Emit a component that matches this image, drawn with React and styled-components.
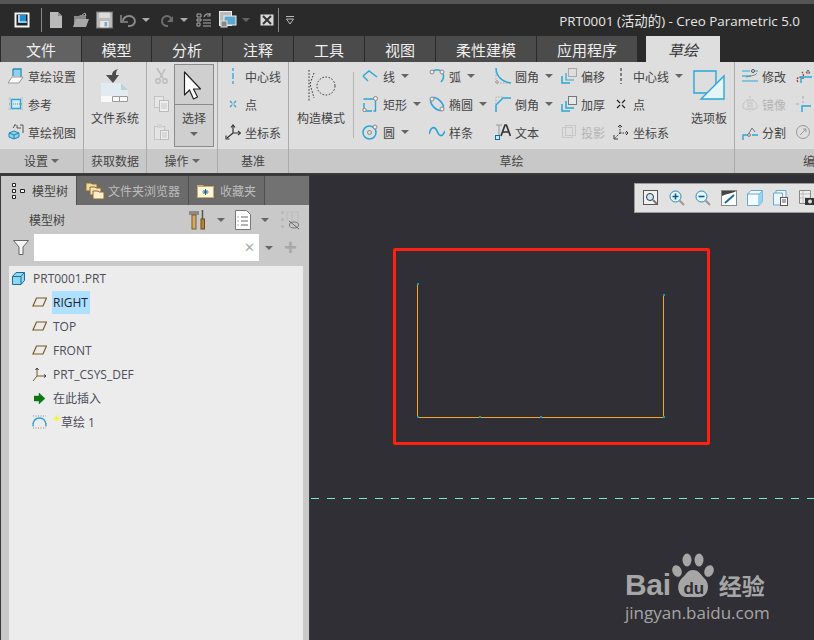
import React from "react";
import styled, { createGlobalStyle } from "styled-components";

const CJK = `"Noto Sans CJK SC", "Liberation Sans", sans-serif`;
const LATIN = `"Open Sans", "Noto Sans CJK SC", sans-serif`;

const Global = createGlobalStyle`
  html, body { margin: 0; padding: 0; background: #2f2f35; }
  * { box-sizing: border-box; }
`;

// 16px drawing box, everything below goes through this
const Ico = ({ s = 16, w, h, vb, children }) => (
  <svg width={w || s} height={h || s} viewBox={vb || `0 0 ${w || s} ${h || s}`} fill="none" style={{ flex: "none", display: "block" }}>
    {children}
  </svg>
);

const BLUE = "#2aa7d8";

const icons = {
  // title bar
  app: (
    <Ico>
      <rect x=".5" y=".5" width="15" height="15" fill="#f4f4f4" />
      <rect x="2.5" y="2.5" width="11" height="11" fill="#222" />
      <rect x="4" y="3" width="8" height="8" fill="#1d8fd6" />
      <path d="M5 3v7h8" stroke="#fff" strokeWidth="1.2" />
    </Ico>
  ),
  fileNew: <Ico><path d="M2 0h8l4 4v12H2z" fill="#b8b8b8" /><path d="M10 0v4h4" fill="#8c8c8c" /></Ico>,
  open: (
    <Ico w={18}>
      <path d="M2 4h5l1-1h6v9H2z" fill="#888" />
      <path d="M1 15l3-8h13l-3 8z" fill="#a8a8a8" />
      <path d="M10 3l3-2 1 3" stroke="#aaa" />
    </Ico>
  ),
  save: (
    <Ico w={17} h={18} vb="0 0 16 16">
      <rect x=".5" y=".5" width="15" height="15" fill="#bbb" stroke="#777" />
      <rect x="3" y="1" width="10" height="5" fill="#dcdcdc" />
      <rect x="4" y="9" width="8" height="6" fill="#e8e8e8" />
      <rect x="8" y="10" width="2.5" height="4" fill="#7aa6c8" />
    </Ico>
  ),
  undo: <Ico w={18}><path d="M3 9a6 5 0 1 1 5 5" stroke="#8a8a8a" strokeWidth="2" /><path d="M1 3v7h7" stroke="#8a8a8a" strokeWidth="1.5" /></Ico>,
  redo: <Ico><path d="M13 9a5 5 0 1 0-4 5" stroke="#6d6d6d" strokeWidth="2" /><path d="M14 4v6H8z" fill="#6d6d6d" /></Ico>,
  regen: (
    <Ico>
      <path d="M1 2h4v3H1zM1 7h4v2H1zM1 11h3v3H1zM7 8h8M7 11h8M7 14h8" stroke="#aaa" />
      <path d="M8 5c1-3 4-4 6-2M14 1v3h-3" stroke="#9a9a9a" strokeWidth="1.2" />
    </Ico>
  ),
  windows: (
    <Ico w={18} h={18}>
      <rect x=".5" y=".5" width="12" height="14" fill="#bbb" stroke="#eee" />
      <rect x="5" y="5" width="12" height="9" fill="#5ea7d0" stroke="#eee" />
      <rect x="2" y="10" width="6" height="6" fill="#888" stroke="#ddd" />
    </Ico>
  ),
  closeWin: (
    <Ico w={14} h={14}>
      <rect x=".5" y="1.5" width="13" height="11" fill="#d8d8d8" />
      <path d="M3 3l8 8M11 3l-8 8" stroke="#333" strokeWidth="2" />
    </Ico>
  ),
  customize: <Ico w={10} h={10}><path d="M1 1.5h8M1.5 4h7L5 9z" stroke="#bbb" /></Ico>,

  // settings group
  sketchSetup: (
    <Ico>
      <path d="M5 1h8v10" stroke="#1c8cb8" strokeWidth="1.3" />
      <path d="M5 1v7" stroke="#1c8cb8" strokeWidth="1.3" />
      <path d="M0 15l4-6h11l-4 6z" fill="#fff" stroke="#999" />
      <rect x="6" y="2" width="6" height="6" fill="#8fd0ea" />
    </Ico>
  ),
  refs: (
    <Ico>
      <path d="M2 1v14M14 1v14M0 3h16M0 13h16" stroke="#bbb" strokeDasharray="1 1" />
      <rect x="3.5" y="3.5" width="9" height="9" fill="#cdeaf6" stroke={BLUE} strokeWidth="1.4" />
      <path d="M1 8h14" stroke="#888" strokeDasharray="1 1" />
    </Ico>
  ),
  sketchView: (
    <Ico>
      <path d="M6 1h2M12 1h3v8M5 4l2-3" stroke="#555" />
      <path d="M9 1v3h4" stroke="#555" />
      <path d="M1 9l5-2 5 2v4l-5 2-5-2z" fill="#8fd0ea" stroke="#1c8cb8" />
      <path d="M1 9l5 2 5-2M6 11v4" stroke="#1c8cb8" />
    </Ico>
  ),
  fileSystem: (
    <Ico w={30} h={34}>
      <path d="M18 0c-4 1-6 3-6 6H6l7 8 6-8h-3c0-2 0-4 2-6z" fill="#4c4c4c" />
      <path d="M1 14h20l7 7v12H1z" fill="#f8f8f8" />
      <path d="M21 14v7h7z" fill="#b9d0de" />
      <path d="M1 14h20v7l7 0v6H1z" fill="#e2ebf0" />
      <path d="M12.500 27.500h7v5h-7zM19.500 27.500h8v5h-8z" stroke="#9a9a9a" />
    </Ico>
  ),
  cut: <Ico><path d="M3 0l6 10M11 1l-5 9" stroke="#bbb" strokeWidth="1.5" /><circle cx="4" cy="13" r="2.2" stroke="#bbb" strokeWidth="1.4" /><circle cx="11" cy="13" r="2.2" stroke="#bbb" strokeWidth="1.4" /></Ico>,
  copy: <Ico><rect x=".5" y=".5" width="9" height="11" fill="#e6e6e6" stroke="#c4c4c4" /><rect x="5.5" y="4.5" width="9" height="11" fill="#eee" stroke="#bbb" /><path d="M7 8h6M7 10h6M7 12h6" stroke="#c4c4c4" /></Ico>,
  paste: <Ico><rect x=".5" y="2.5" width="10" height="13" fill="#e4e4e4" stroke="#c4c4c4" /><rect x="3" y="0" width="5" height="4" fill="#d4d4d4" /><rect x="6.5" y="6.5" width="8" height="9" fill="#eee" stroke="#bbb" /><path d="M8 9h5M8 11h5M8 13h5" stroke="#c4c4c4" /></Ico>,
  cursor: <Ico w={18} h={30}><path d="M1.5 1v23l5-5 4 9 4-2-4-8h7z" fill="#fff" stroke="#222" strokeWidth="1.2" strokeLinejoin="round" /></Ico>,
  centerline: <Ico><path d="M8 0v3M8 5v6M8 13v3" stroke={BLUE} strokeWidth="1.3" /></Ico>,
  point: <Ico><path d="M5 5l2 2M11 5L9 7M5 11l2-2M11 11L9 9" stroke={BLUE} strokeWidth="1.3" /><circle cx="8" cy="8" r=".8" fill="#999" /></Ico>,
  csys: <Ico><path d="M8 9V2M8 9h7M8 9l-6 5" stroke="#333" strokeWidth="1.2" /><path d="M6 3.5L8 1l2 2.5M13 7l2.5 2-2.5 2M1 11.5V15h3.5" stroke="#333" strokeWidth="1.1" /></Ico>,

  // sketching group
  construct: (
    <Ico w={30} h={32}>
      <path d="M3 0v32M8 3L4 14l4 14" stroke="#333" strokeDasharray="1.6 1.6" />
      <circle cx="20" cy="16" r="9" stroke="#333" strokeDasharray="1.6 1.6" />
    </Ico>
  ),
  line: <Ico><path d="M1 8l6-5 8 6M1 8l5 5" stroke={BLUE} strokeWidth="1.4" /></Ico>,
  arc: <Ico><path d="M3 4c3-3 8-3 10 0 2 3 2 7-1 10" stroke={BLUE} strokeWidth="1.5" /><circle cx="3" cy="4" r="2" fill="#eee" stroke="#888" /><circle cx="13" cy="4" r="2" fill="#eee" stroke="#888" /></Ico>,
  rect: <Ico><path d="M2 7v8h8M1.500 3h11v1M13.500 5v10h-2" stroke={BLUE} strokeWidth="1.4" /><circle cx="13.500" cy="2.500" r="2" fill="#eee" stroke="#888" /><circle cx="2.500" cy="14" r="1.700" fill="#eee" stroke="#888" /></Ico>,
  ellipse: <Ico><ellipse cx="8" cy="8" rx="8" ry="4.5" transform="rotate(45 8 8)" stroke={BLUE} strokeWidth="1.6" /><circle cx="3" cy="3" r="2" fill="#eee" stroke="#888" /><circle cx="13" cy="13" r="2" fill="#eee" stroke="#888" /></Ico>,
  circle: <Ico><circle cx="7.5" cy="8.5" r="6.5" stroke={BLUE} strokeWidth="1.5" /><circle cx="7.5" cy="8.5" r="2" fill="#ddd" stroke="#888" /><circle cx="13" cy="3" r="2" fill="#eee" stroke="#888" /></Ico>,
  spline: <Ico><path d="M0 10c2-8 6-8 8-3s5 7 8 0" stroke={BLUE} strokeWidth="1.7" /></Ico>,
  fillet: <Ico><path d="M1 0c0 8 6 14 15 15" stroke={BLUE} strokeWidth="1.5" /><path d="M1 4v11h11" stroke="#aaa" strokeDasharray="1.5 1.5" /><circle cx="2" cy="14" r="1.3" fill="#ddd" stroke="#999" /></Ico>,
  chamfer: <Ico><path d="M1 16V9l7-7h8" stroke={BLUE} strokeWidth="1.5" /><path d="M1 8V1h7" stroke="#aaa" strokeDasharray="1.5 1.5" /></Ico>,
  text: <Ico><path d="M1 1h6M4 1v10" stroke="#999" /><path d="M6 12l4-11h1.4l4 11M7.5 8h6" stroke="#333" strokeWidth="1.7" /><rect x=".5" y="11.5" width="4" height="4" fill="#cdeaf6" stroke="#0b6f9e" /></Ico>,
  offset: <Ico><path d="M1 8v7h8" stroke={BLUE} strokeWidth="1.5" /><path d="M5 5v7h8" stroke={BLUE} strokeWidth="1.2" /><rect x="7.5" y=".5" width="8" height="8" stroke="#aaa" /></Ico>,
  thicken: <Ico><path d="M1 8v7h8M5 5v7h8" stroke={BLUE} strokeWidth="1.5" /><rect x="7.5" y=".5" width="8" height="8" fill="#e8e8e8" stroke="#777" /></Ico>,
  project: <Ico><rect x="1.5" y="3.5" width="10" height="10" stroke="#c8c8c8" /><rect x="4.5" y="1.5" width="10" height="10" stroke="#c8c8c8" /></Ico>,
  centerlineDark: <Ico><path d="M8 0v3M8 5v3M8 10v3M8 15v1" stroke="#333" strokeWidth="1.1" /></Ico>,
  pointDark: <Ico><path d="M4 4l3 3M12 4L9 7M4 12l3-3M12 12L9 9" stroke="#222" strokeWidth="1.2" /></Ico>,
  csysDark: <Ico><path d="M7 9V2M7 9h8M7 9l-5 5" stroke="#333" strokeDasharray="1.5 1" /><path d="M5 3l2-2 2 2M13 7l2 2-2 2M1 11v4h4" stroke="#333" /></Ico>,
  palette: (
    <Ico w={32} h={30}>
      <path d="M1 1h22v22H1z" stroke={BLUE} strokeWidth="1.4" />
      <path d="M31 6v23H8z" fill="#e6f3f9" stroke={BLUE} strokeWidth="1.4" />
    </Ico>
  ),
  modify: <Ico><path d="M0 3h8M13 3h3M0 13h16" stroke={BLUE} strokeWidth="1.2" /><path d="M4 9l9-2 2-2" stroke="#888" /><path d="M0 8h9" stroke={BLUE} strokeWidth="1.2" /><circle cx="11" cy="3" r="1.5" stroke="#555" /></Ico>,
  mirror: <Ico><path d="M8 0v16" stroke="#bbb" strokeDasharray="2 1" /><path d="M6 3L1 8v4l5 2zM10 3l5 5v4l-5 2z" stroke="#c4c4c4" /></Ico>,
  split: <Ico><path d="M1 16v-5h5M10 11h6" stroke={BLUE} strokeWidth="1.4" /><path d="M6 11l4-7 3 4" stroke="#777" /><circle cx="7" cy="11" r="1.4" fill="#eee" stroke="#777" /></Ico>,
  trim: <Ico w={18}><path d="M3 14c-3-4 2-6 4-4s2-4 0-6" stroke="#a63a2a" strokeDasharray="2 1" strokeWidth="1.3" /><path d="M6 15v-6h11" stroke={BLUE} strokeWidth="1.4" /><path d="M11 5l2-3 2 3z" stroke="#666" /></Ico>,
  corner: <Ico><path d="M1 8h3M8 0v3M8 5v2" stroke="#aaa" /><path d="M7 16V10h9" stroke={BLUE} strokeWidth="1.4" /></Ico>,
  rotate: <Ico><circle cx="8" cy="8" r="6.5" stroke="#999" /><path d="M5 11l6-6M8 5h3v3" stroke="#999" /></Ico>,

  // panel
  treeTab: <Ico w={14} h={16}><path d="M.5.5h3v3h-3zM.5 6.5h3v3h-3zM.5 12.5h3v3h-3zM8.5 6.5h4v3h-4z" fill="#fff" stroke="#222" /></Ico>,
  folders: (
    <Ico w={20} h={18}>
      <path d="M1 1h5l1 1h5v7H1z" fill="#f2d9a0" stroke="#8a6a3a" />
      <path d="M5 5h5l1 1h5v7H5z" fill="#f6e2b0" stroke="#8a6a3a" />
      <path d="M8 9h5l1 1h5v7H8z" fill="#fbeec8" stroke="#8a6a3a" />
    </Ico>
  ),
  favorite: (
    <Ico w={18} h={16}>
      <path d="M0 2h6l1 1h10v12H0z" fill="#c9a868" />
      <rect x="1" y="4" width="15" height="10" fill="#fdf6dc" />
      <path d="M8.5 6v6M5.5 9h6M6.5 7l4 4M10.5 7l-4 4" stroke="#0b5f8a" strokeWidth=".9" />
    </Ico>
  ),
  tools: (
    <Ico w={18} h={20}>
      <path d="M1 1h10v4H1z" fill="#8a8a8a" />
      <rect x="4" y="5" width="4" height="14" fill="#d4aa6a" stroke="#7a5a2a" />
      <path d="M14.5 0v9" stroke="#555" strokeWidth="1.5" />
      <rect x="13" y="9" width="3.5" height="10" fill="#b8863a" stroke="#6a4a1a" />
    </Ico>
  ),
  doc: <Ico w={16} h={20}><path d="M.5.5h11l4 4v15H.5z" fill="#fff" stroke="#777" /><path d="M6 7h7M6 11h7M6 15h7M2.5 7h1M2.5 11h1M2.5 15h1" stroke="#666" /></Ico>,
  treeOff: (
    <Ico w={20} h={20}>
      <path d="M1 1h3v3H1zM1 8h3v3H1zM1 15h3v3H1z" fill="#bbb" />
      <path d="M7 2h11v12M7 2v8M12 2v9" stroke="#bbb" />
      <ellipse cx="14" cy="15" rx="4.5" ry="3" stroke="#777" />
      <path d="M9 11l10 8" stroke="#666" />
    </Ico>
  ),
  filter: <Ico w={16} h={15}><path d="M.5.5h15L10 7v7.5H6V7z" fill="#f4f4f4" stroke="#666" /></Ico>,
  part: <Ico w={13} h={13}><path d="M4 .5h8.5v8L9 12.5H.5v-8z" fill="#8fd6f2" stroke="#1c6f96" /><path d="M.5 4.5H9v8M9 4.5l3.5-4" stroke="#1c6f96" /></Ico>,
  plane: <Ico w={15} h={10}><path d="M4.5 1h10L11 9H1z" stroke="#7a5a22" strokeWidth="1.2" /></Ico>,
  csysTree: <Ico w={15} h={15}><path d="M5 9V2M5 9h8M5 9l-4 5" stroke="#7a5a22" /><path d="M3.5 3L5 1l1.5 2M12 7.5L14 9l-2 1.5" stroke="#333" /></Ico>,
  insert: <Ico w={11} h={11}><path d="M0 3h5V0l6 5.5L5 11V8H0z" fill="#0b7a0b" stroke="#063" strokeWidth=".4" /></Ico>,
  sketchTree: <Ico w={15} h={14}><path d="M1 11c0-6 3-8 6.500-8s6.500 2 6.500 8" stroke={BLUE} strokeWidth="1.4" /><path d="M1 1h13M1 13h13M1 8v5M14 8v5" stroke="#888" strokeDasharray="1 1.500" /></Ico>,

  // floating view toolbar
  zoomBox: <Ico w={16} h={16}><rect x=".5" y=".5" width="14" height="14" fill="#f2f2f2" stroke="#555" /><circle cx="7" cy="7" r="3.500" fill="#cdeaf6" stroke="#333" /><path d="M10 10l4 4" stroke="#777" strokeWidth="2" /></Ico>,
  zoomIn: <Ico><circle cx="6.500" cy="6.500" r="5.500" fill="#e6f6fc" stroke="#2a88aa" /><path d="M3.500 6.500h6M6.500 3.500v6" stroke="#0b5f8a" strokeWidth="1.6" /><path d="M10.500 10.500l4.500 4.500" stroke="#999" strokeWidth="2" /></Ico>,
  zoomOut: <Ico><circle cx="6.500" cy="6.500" r="5.500" fill="#e6f6fc" stroke="#2a88aa" /><path d="M3.500 6.500h6" stroke="#0b5f8a" strokeWidth="1.6" /><path d="M10.500 10.500l4.500 4.500" stroke="#999" strokeWidth="2" /></Ico>,
  refit: <Ico><rect x=".5" y=".5" width="15" height="15" fill="#fff" stroke="#888" /><path d="M1 1h14c-2 2-8 2-14 5z" fill="#444" /><path d="M4 13L13 5" stroke="#1c6f96" strokeWidth="2" /></Ico>,
  view3d: <Ico><path d="M4 .5h11.500v11L12 15.500H.5V4z" fill="#f2fbff" stroke="#6aa8c8" /><path d="M12 15.500V4L15.500.5M12 4H.5" stroke="#6aa8c8" /><path d="M12 4l3.500-3.500v11L12 15.500z" fill="#8fd6f2" /></Ico>,
  viewSaved: <Ico><path d="M3 .5h10v9H3z" fill="#eef8fc" stroke="#6aa8c8" /><path d="M.5 3h9v12h-9z" fill="#eaf6fb" stroke="#6aa8c8" /><rect x="7.500" y="7.500" width="7" height="8" fill="#fff" stroke="#555" /><path d="M9 10h4M9 12h4" stroke="#555" /></Ico>,
  camera: <Ico w={16} h={16}><path d="M.5.500h11v13H.5z" stroke="#888" fill="#eee" /><path d="M1 4h10M1 8h10M4 1v12" stroke="#bbb" /><rect x="6" y="8" width="10" height="7" fill="#333" /><circle cx="11" cy="11.500" r="2" fill="#ddd" /></Ico>,
};

const Page = styled.div`
  width: 814px;
  height: 640px;
  overflow: hidden;
  display: flex;
  flex-direction: column;
  background: #2f2f35;
  font-family: ${CJK};
  font-size: 12px;
  color: #444;
`;

const TitleBar = styled.div`
  height: 36px;
  flex: none;
  background: #2a2a2a;
  border-top: 4px solid #555;
  display: flex;
  align-items: center;
  padding-left: 14px;
  color: #e6e6e6;
`;

const QuickItem = styled.span`
  flex: none;
  display: flex;
  margin-left: ${(p) => p.$gap || 0}px;
`;

const QuickDivider = styled.span`
  width: 1px;
  height: 24px;
  flex: none;
  background: #888;
  margin-left: ${(p) => p.$gap}px;
`;

const TinyCaret = styled.span`
  width: 0;
  height: 0;
  flex: none;
  border-left: 4px solid transparent;
  border-right: 4px solid transparent;
  border-top: 4px solid ${(p) => p.$color || "#666"};
  margin-left: ${(p) => p.$gap ?? 5}px;
`;

const WindowTitle = styled.div`
  margin-left: auto;
  margin-right: 14px;
  font-family: ${LATIN};
  font-size: 13.4px;
  white-space: nowrap;
`;

const TabBar = styled.div`
  height: 26px;
  flex: none;
  background: #2a2a2a;
  display: flex;
  padding-left: 1px;
`;

const Tab = styled.div`
  width: ${(p) => p.$w}px;
  margin-right: 1px;
  margin-left: ${(p) => p.$ml || 0}px;
  display: flex;
  align-items: center;
  justify-content: center;
  font-size: 15px;
  background: ${(p) => (p.$tone === "sketch" ? "#dedede" : p.$tone === "file" ? "#626262" : "#4b4b4b")};
  color: ${(p) => (p.$tone === "sketch" ? "#333" : "#eee")};
  font-style: ${(p) => (p.$tone === "sketch" ? "italic" : "normal")};
`;

const Ribbon = styled.div`
  height: 113px;
  flex: none;
  display: flex;
  background: #dedede;
  border-bottom: 2px solid #3a3a3a;
`;

const Group = styled.div`
  width: ${(p) => p.$w}px;
  flex: none;
  display: flex;
  flex-direction: column;
  border-right: 1px solid #aaa;
  overflow: hidden;
  &:last-child { flex: 1; border-right: 0; }
`;

const GroupBody = styled.div`
  height: 87px;
  flex: none;
  display: flex;
  padding-left: ${(p) => p.$pl || 0}px;
`;

const GroupFooter = styled.div`
  flex: 1;
  background: #c8c8c8;
  display: flex;
  align-items: center;
  justify-content: center;
  font-size: 12px;
  padding-bottom: 1px;
`;

const ClippedFooter = styled(GroupFooter)`
  justify-content: flex-start;
  padding-left: 68px;
  white-space: nowrap;
`;

const Column = styled.div`
  width: ${(p) => (p.$w ? `${p.$w}px` : "auto")};
  flex: none;
  display: flex;
  flex-direction: column;
  margin-left: ${(p) => p.$ml || 0}px;
`;

const ToolRow = styled.div`
  height: 28px;
  flex: none;
  display: flex;
  align-items: center;
  gap: ${(p) => p.$gap ?? 4}px;
  white-space: nowrap;
  color: ${(p) => (p.$off ? "#b4b4b4" : "inherit")};
`;

const BigTool = styled.div`
  width: ${(p) => p.$w}px;
  flex: none;
  display: flex;
  flex-direction: column;
  align-items: center;
  padding-top: ${(p) => p.$pt ?? 6}px;
`;

const BigIconSlot = styled.div`
  height: 36px;
  display: flex;
  align-items: center;
  justify-content: center;
`;

const BigLabel = styled.div`
  margin-top: ${(p) => p.$mt || 4}px;
  line-height: 20px;
`;

const SelectButton = styled.div`
  width: 40px;
  height: 83px;
  margin-top: 2px;
  flex: none;
  background: #cfcfcf;
  border: 1px solid #8a8a8a;
  display: flex;
  flex-direction: column;
`;

const SelectTop = styled.div`
  height: 40px;
  border-bottom: 1px solid #8a8a8a;
  padding: 6px 0 0 8px;
`;

const SelectBottom = styled.div`
  flex: 1;
  display: flex;
  flex-direction: column;
  align-items: center;
  padding-top: 3px;
  line-height: 20px;
  gap: 4px;
`;

const RibbonDivider = styled.div`
  width: 1px;
  height: 66px;
  flex: none;
  background: #b4b4b4;
  margin-top: 10px;
`;

const Main = styled.div`
  flex: 1;
  min-height: 0;
  display: flex;
`;

const Side = styled.div`
  width: 310px;
  flex: none;
  display: flex;
  flex-direction: column;
  background: #c9c9c9;
  border-left: 1px solid #3a3a3a;
  border-right: 1px solid #3a3a3a;
`;

const PanelTabs = styled.div`
  height: 30px;
  flex: none;
  display: flex;
  background: #727272;
  border-top: 1px solid #3a3a3a;
`;

const PanelTab = styled.div`
  width: ${(p) => p.$w}px;
  flex: none;
  display: flex;
  align-items: center;
  gap: ${(p) => p.$gap ?? 5}px;
  padding-left: ${(p) => p.$pl}px;
  background: ${(p) => (p.$on ? "#c9c9c9" : "#6b6b6b")};
  color: ${(p) => (p.$on ? "#444" : "#bdbdbd")};
  border-right: 1px solid #4f4f4f;
`;

const PanelHead = styled.div`
  height: 29px;
  flex: none;
  display: flex;
  align-items: center;
  padding-left: 28px;
  color: #444;
`;

const HeadTools = styled.div`
  margin-left: auto;
  display: flex;
  align-items: center;
  padding-right: 9px;
`;

const FilterRow = styled.div`
  height: 27px;
  flex: none;
  display: flex;
  align-items: center;
  padding-left: 12px;
`;

const SearchBox = styled.div`
  width: 225px;
  height: 27px;
  margin-left: 5px;
  background: #fff;
  display: flex;
  align-items: center;
  justify-content: flex-end;
  padding-right: 4px;
  color: #aaa;
  font-family: "Liberation Sans", sans-serif;
  font-size: 13px;
`;

const PlusSign = styled.span`
  margin-left: 11px;
  color: #a8a8a8;
  font: bold 22px/1 "Liberation Sans", sans-serif;
`;

const Tree = styled.div`
  flex: 1;
  margin: 5px 6px 0 8px;
  background: #ececec;
  font-family: ${LATIN};
  font-size: 12px;
`;

const TreeRow = styled.div`
  height: 24px;
  display: flex;
  align-items: center;
  padding-left: ${(p) => p.$indent}px;
  color: #4c4c5a;
`;

const TreeIcon = styled.span`
  width: ${(p) => p.$w || 20}px;
  flex: none;
  display: flex;
  margin-right: ${(p) => p.$mr ?? 1}px;
`;

const TreeLabel = styled.span`
  height: 23px;
  line-height: 23px;
  padding: ${(p) => (p.$on ? "0 2px 0 1px" : "0")};
  margin-left: ${(p) => (p.$on ? -1 : 0)}px;
  background: ${(p) => (p.$on ? "#aee0ff" : "transparent")};
  color: ${(p) => (p.$on ? "#223" : "inherit")};
  white-space: nowrap;
`;

const NewMark = styled.span`
  color: #f4f400;
  font-size: 10px;
  line-height: 1;
  align-self: flex-start;
  margin-top: 3px;
`;

const Canvas = styled.div`
  flex: 1;
  position: relative;
  overflow: hidden;
  background: #2f2f35;
`;

const ViewBar = styled.div`
  position: absolute;
  left: 324px;
  top: 8px;
  width: 200px;
  height: 30px;
  background: #e2e2e2;
  border: 1px solid #9a9a9a;
  display: flex;
  align-items: center;
  gap: 10px;
  padding-left: 8px;
`;

const Drawing = styled.svg`
  position: absolute;
  inset: 0;
`;

const Highlight = styled.div`
  position: absolute;
  left: 83px;
  top: 73px;
  width: 317px;
  height: 197px;
  border: 3px solid #ff2012;
  border-radius: 2px;
`;

const Watermark = styled.div`
  position: absolute;
  left: 315px;
  top: 377px;
  width: 175px;
  color: #a6a6a6;
  font-family: "Liberation Sans", sans-serif;
`;

const MarkTop = styled.div`
  display: flex;
  align-items: flex-end;
  height: 48px;
`;

const MarkBai = styled.span`
  font-size: 30px;
  font-weight: bold;
  line-height: 30px;
  letter-spacing: -0.3px;
`;

const MarkPaw = styled.span`
  position: relative;
  width: 46px;
  height: 48px;
  flex: none;
`;

const MarkDu = styled.span`
  position: absolute;
  left: 10px;
  bottom: 2px;
  width: 26px;
  text-align: center;
  color: #2f2f35;
  font-size: 17px;
  font-weight: bold;
  line-height: 18px;
`;

const MarkJy = styled.span`
  font-family: ${CJK};
  font-size: 23px;
  font-weight: bold;
  line-height: 30px;
  margin-left: 2px;
  white-space: nowrap;
`;

const MarkUrl = styled.div`
  font-family: "Open Sans", sans-serif;
  font-size: 17px;
  line-height: 20px;
  margin-top: 3px;
  white-space: nowrap;
`;

const TABS = [
  ["文件", 80, "file"],
  ["模型", 69],
  ["分析", 70],
  ["注释", 70],
  ["工具", 70],
  ["视图", 70],
  ["柔性建模", 100],
  ["应用程序", 100],
];

const Tool = ({ icon, label, caret, off, gap }) => (
  <ToolRow $off={off} $gap={gap}>
    {icon}
    <span>{label}</span>
    {caret && <TinyCaret $gap={(gap ?? 4) === 5 ? 1 : 2} />}
  </ToolRow>
);

const Footer = ({ label, caret }) => (
  <GroupFooter>
    {label}
    {caret && <TinyCaret $gap={3} />}
  </GroupFooter>
);

export default function App() {
  return (
    <Page>
      <Global />
      <TitleBar>
        <QuickItem>{icons.app}</QuickItem>
        <QuickDivider $gap={11} />
        <QuickItem $gap={6}>{icons.fileNew}</QuickItem>
        <QuickItem $gap={8}>{icons.open}</QuickItem>
        <QuickItem $gap={6}>{icons.save}</QuickItem>
        <QuickItem $gap={7}>{icons.undo}</QuickItem>
        <TinyCaret $color="#aaa" $gap={4} />
        <QuickItem $gap={9}>{icons.redo}</QuickItem>
        <TinyCaret $color="#aaa" $gap={5} />
        <QuickItem $gap={8}>{icons.regen}</QuickItem>
        <QuickItem $gap={7}>{icons.windows}</QuickItem>
        <TinyCaret $color="#666" $gap={5} />
        <QuickItem $gap={10}>{icons.closeWin}</QuickItem>
        <QuickDivider $gap={4} />
        <QuickItem $gap={6}>{icons.customize}</QuickItem>
        <WindowTitle>PRT0001 (活动的) - Creo Parametric 5.0</WindowTitle>
      </TitleBar>

      <TabBar>
        {TABS.map(([label, w, tone]) => (
          <Tab key={label} $w={w} $tone={tone}>{label}</Tab>
        ))}
        <Tab $w={74} $ml={8} $tone="sketch">草绘</Tab>
      </TabBar>

      <Ribbon>
        <Group $w={84}>
          <GroupBody $pl={8}>
            <Column>
              <Tool icon={icons.sketchSetup} label="草绘设置" />
              <Tool icon={icons.refs} label="参考" />
              <Tool icon={icons.sketchView} label="草绘视图" />
            </Column>
          </GroupBody>
          <Footer label="设置" caret />
        </Group>

        <Group $w={63}>
          <GroupBody>
            <BigTool $w={62}>
              <BigIconSlot>{icons.fileSystem}</BigIconSlot>
              <BigLabel>文件系统</BigLabel>
            </BigTool>
          </GroupBody>
          <Footer label="获取数据" />
        </Group>

        <Group $w={71}>
          <GroupBody $pl={7}>
            <Column $w={20}>
              <ToolRow>{icons.cut}</ToolRow>
              <ToolRow>{icons.copy}</ToolRow>
              <ToolRow>{icons.paste}</ToolRow>
            </Column>
            <SelectButton>
              <SelectTop>{icons.cursor}</SelectTop>
              <SelectBottom>
                选择
                <TinyCaret $gap={0} />
              </SelectBottom>
            </SelectButton>
          </GroupBody>
          <Footer label="操作" caret />
        </Group>

        <Group $w={71}>
          <GroupBody $pl={7}>
            <Column>
              <Tool icon={icons.centerline} label="中心线" />
              <Tool icon={icons.point} label="点" />
              <Tool icon={icons.csys} label="坐标系" />
            </Column>
          </GroupBody>
          <Footer label="基准" />
        </Group>

        <Group $w={446}>
          <GroupBody>
            <BigTool $w={64}>
              <BigIconSlot>{icons.construct}</BigIconSlot>
              <BigLabel>构造模式</BigLabel>
            </BigTool>
            <RibbonDivider />
            <Column $w={67} $ml={8}>
              <Tool icon={icons.line} label="线" caret gap={5} />
              <Tool icon={icons.rect} label="矩形" caret gap={5} />
              <Tool icon={icons.circle} label="圆" caret gap={5} />
            </Column>
            <Column $w={66}>
              <Tool icon={icons.arc} label="弧" caret />
              <Tool icon={icons.ellipse} label="椭圆" caret />
              <Tool icon={icons.spline} label="样条" />
            </Column>
            <Column $w={66}>
              <Tool icon={icons.fillet} label="圆角" caret />
              <Tool icon={icons.chamfer} label="倒角" caret />
              <Tool icon={icons.text} label="文本" />
            </Column>
            <Column $w={52}>
              <Tool icon={icons.offset} label="偏移" />
              <Tool icon={icons.thicken} label="加厚" />
              <Tool icon={icons.project} label="投影" off />
            </Column>
            <Column $w={70}>
              <Tool icon={icons.centerlineDark} label="中心线" caret />
              <Tool icon={icons.pointDark} label="点" />
              <Tool icon={icons.csysDark} label="坐标系" />
            </Column>
            <BigTool $w={52} $pt={5}>
              <BigIconSlot>{icons.palette}</BigIconSlot>
              <BigLabel $mt={5}>选项板</BigLabel>
            </BigTool>
          </GroupBody>
          <Footer label="草绘" />
        </Group>

        <Group>
          <GroupBody $pl={7}>
            <Column $w={53}>
              <Tool icon={icons.modify} label="修改" />
              <Tool icon={icons.mirror} label="镜像" off />
              <Tool icon={icons.split} label="分割" />
            </Column>
            <Column>
              <ToolRow>{icons.trim}</ToolRow>
              <ToolRow>{icons.corner}</ToolRow>
              <ToolRow>{icons.rotate}</ToolRow>
            </Column>
          </GroupBody>
          <ClippedFooter>编辑</ClippedFooter>
        </Group>
      </Ribbon>

      <Main>
        <Side>
          <PanelTabs>
            <PanelTab $on $w={76} $pl={11} $gap={6}>{icons.treeTab}模型树</PanelTab>
            <PanelTab $w={112} $pl={8} $gap={3}>{icons.folders}文件夹浏览器</PanelTab>
            <PanelTab $w={76} $pl={8}>{icons.favorite}收藏夹</PanelTab>
          </PanelTabs>
          <PanelHead>
            模型树
            <HeadTools>
              {icons.tools}
              <TinyCaret $gap={11} />
              <QuickItem $gap={10}>{icons.doc}</QuickItem>
              <TinyCaret $gap={10} />
              <QuickItem $gap={11}>{icons.treeOff}</QuickItem>
            </HeadTools>
          </PanelHead>
          <FilterRow>
            {icons.filter}
            <SearchBox>✕</SearchBox>
            <TinyCaret $gap={6} />
            <PlusSign>+</PlusSign>
          </FilterRow>
          <Tree>
            <TreeRow $indent={3}>
              <TreeIcon>{icons.part}</TreeIcon>
              <TreeLabel>PRT0001.PRT</TreeLabel>
            </TreeRow>
            <TreeRow $indent={23}>
              <TreeIcon>{icons.plane}</TreeIcon>
              <TreeLabel $on>RIGHT</TreeLabel>
            </TreeRow>
            <TreeRow $indent={23}>
              <TreeIcon>{icons.plane}</TreeIcon>
              <TreeLabel>TOP</TreeLabel>
            </TreeRow>
            <TreeRow $indent={23}>
              <TreeIcon>{icons.plane}</TreeIcon>
              <TreeLabel>FRONT</TreeLabel>
            </TreeRow>
            <TreeRow $indent={23}>
              <TreeIcon>{icons.csysTree}</TreeIcon>
              <TreeLabel>PRT_CSYS_DEF</TreeLabel>
            </TreeRow>
            <TreeRow $indent={25}>
              <TreeIcon $w={18}>{icons.insert}</TreeIcon>
              <TreeLabel>在此插入</TreeLabel>
            </TreeRow>
            <TreeRow $indent={23}>
              <TreeIcon>{icons.sketchTree}</TreeIcon>
              <NewMark>✳</NewMark>
              <TreeLabel>草绘 1</TreeLabel>
            </TreeRow>
          </Tree>
        </Side>

        <Canvas>
          <Drawing width="504" height="465">
            <path d="M107.500 108v134M353.500 119v123M108 242.500h246" stroke="#f5a81c" />
            <path d="M0 323.500H504" stroke="#66f0d0" strokeDasharray="8 8" strokeDashoffset="-1" />
            {[[107, 108], [353, 119], [107, 241], [169, 241], [230, 241], [353, 241]].map(([x, y]) => (
              <rect key={`${x}-${y}`} x={x} y={y} width="2" height="2" fill="#1398c8" />
            ))}
          </Drawing>
          <Highlight />
          <ViewBar>
            {icons.zoomBox}
            {icons.zoomIn}
            {icons.zoomOut}
            {icons.refit}
            {icons.view3d}
            {icons.viewSaved}
            {icons.camera}
          </ViewBar>
          <Watermark>
            <MarkTop>
              <MarkBai>Bai</MarkBai>
              <MarkPaw>
                <svg width="46" height="48" viewBox="0 0 46 48" fill="#a6a6a6">
                  <ellipse cx="6" cy="19" rx="4.500" ry="6" transform="rotate(-25 6 19)" />
                  <ellipse cx="16" cy="8" rx="4.500" ry="6.500" />
                  <ellipse cx="28" cy="8" rx="4.500" ry="6.500" />
                  <ellipse cx="38" cy="19" rx="4.500" ry="6" transform="rotate(25 38 19)" />
                  <path d="M22 18c6 0 8 5 12 9 5 5 4 17-5 18H15C6 44 5 32 11 26c4-3 5-8 11-8z" />
                </svg>
                <MarkDu>du</MarkDu>
              </MarkPaw>
              <MarkJy>经验</MarkJy>
            </MarkTop>
            <MarkUrl>jingyan.baidu.com</MarkUrl>
          </Watermark>
        </Canvas>
      </Main>
    </Page>
  );
}
